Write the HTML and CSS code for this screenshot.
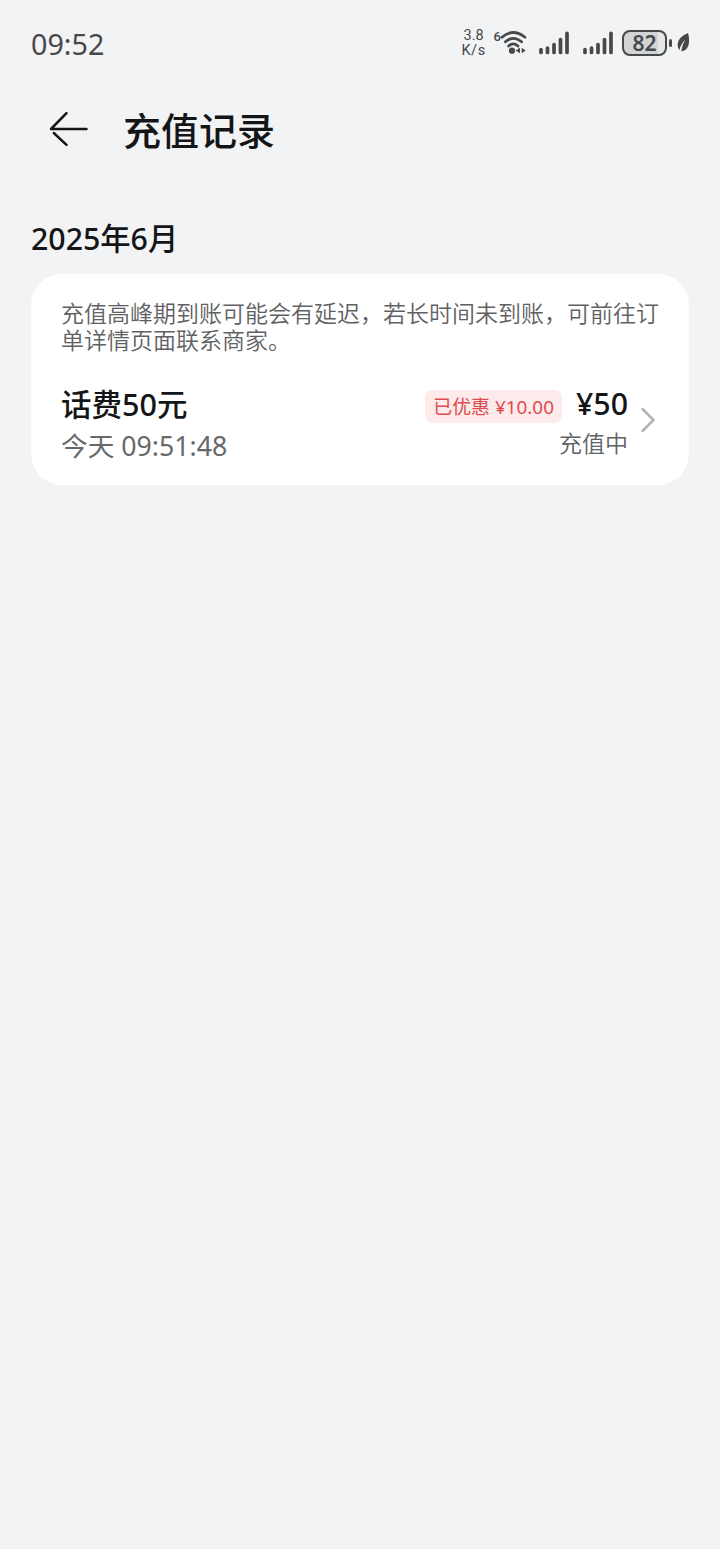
FILE: index.html
```html
<!DOCTYPE html>
<html lang="zh-CN">
<head>
<meta charset="utf-8">
<title>充值记录</title>
<link rel="stylesheet" href="styles.css">
</head>
<body>
<header class="status">
  <span class="clock">09:52</span>
  <div class="indicators">
    <div class="speed"><span>3.8</span><span>K/s</span></div>
    <span class="wifi-gen">6</span>
    <svg class="wifi" width="27" height="30" viewBox="7 0 27 30">
      <g fill="none" stroke="#47484a" stroke-width="2.7" stroke-linecap="round">
        <path d="M9 9.200Q20 -.2 32 9.200"/>
        <path d="M12.400 13.800Q20.200 6.800 28.600 13.800"/>
        <path d="M15.600 18Q20.200 13.800 25 18"/>
      </g>
      <circle cx="19" cy="22.700" r="3.100" fill="#47484a"/>
      <path d="M27 19.700v5.600l-4.300-2.800zM28.700 19.700v5.600l4-2.800z" fill="#47484a"/>
    </svg>
    <svg class="signal" width="30" height="24" viewBox="0 0 30 24">
      <path d="M2 18.500v3M8.500 17v4.500M15 13.500v8M21.500 8.500v13M28 2.300v19.200"/>
    </svg>
    <svg class="signal" width="30" height="24" viewBox="0 0 30 24">
      <path d="M2 18.500v3M8.500 17v4.500M15 13.500v8M21.500 8.500v13M28 2.300v19.200"/>
    </svg>
    <div class="battery"><span>82</span></div>
    <i class="battery-tip"></i>
    <svg class="leaf" width="13" height="22" viewBox="0 0 13 22">
      <path d="M11 1Q1 5 .6 12.500Q.6 16.300 2.600 18.300Q3 13 8.200 7.800Q5 13 4.200 19.300C12 18.500 13.500 10 11 1Z" fill="#47484a"/>
    </svg>
  </div>
</header>
<nav class="titlebar">
  <svg class="back" width="40" height="36" viewBox="0 0 40 36">
    <path d="M17.500 2.200L2 18H37.500M4.800 22L17.500 33.800"/>
  </svg>
  <h1>充值记录</h1>
</nav>
<main>
  <h2>2025年6月</h2>
  <section class="card">
    <p class="notice">充值高峰期到账可能会有延迟，若长时间未到账，可前往订单详情页面联系商家。</p>
    <div class="record">
      <div class="info">
        <span class="name">话费50元</span>
        <span class="time">今天 09:51:48</span>
      </div>
      <div class="payment">
        <div class="amount"><span class="discount">已优惠 ¥10.00</span><span class="price">¥50</span></div>
        <span class="state">充值中</span>
      </div>
      <svg class="chevron" width="16" height="28" viewBox="0 0 16 28">
        <path d="M2.500 3L13.500 14L2.500 25"/>
      </svg>
    </div>
  </section>
</main>
</body>
</html>
```
FILE: styles.css
```css
* { box-sizing: border-box; }
body {
  margin: 0;
  min-height: 1549px;
  background: #f1f3f5;
  color: #141516;
  font-family: "Noto Sans", "Noto Sans CJK SC", sans-serif;
}
span { white-space: nowrap; }
.status {
  height: 86px;
  padding: 0 31px;
  display: flex;
  align-items: center;
  justify-content: space-between;
  color: #47484a;
}
.clock { padding-top: 2px; font-size: 28.700px; line-height: 40px; }
.indicators { display: flex; align-items: center; }
.speed {
  width: 26px;
  margin-right: 7px;
  display: flex;
  flex-direction: column;
  align-items: center;
  font-family: Roboto, sans-serif;
  font-size: 14.500px;
  line-height: 15px;
}
.speed span + span { letter-spacing: .6px; }
.wifi-gen { margin: 0 -1px 12px 0; font: 500 13px/16px Roboto, sans-serif; }
.wifi { margin-right: 12px; }
.signal {
  margin-right: 14px;
  fill: none;
  stroke: #47484a;
  stroke-width: 3.7;
  stroke-linecap: round;
}
.signal + .battery { margin-left: -5px; }
.battery {
  width: 45px;
  height: 26px;
  border: 2px solid #47484a;
  border-radius: 8px;
  background: linear-gradient(90deg, #d2d3d5 84%, #e5e7e9 84%);
  display: flex;
  align-items: center;
  justify-content: center;
  font-size: 21px;
  font-weight: 600;
  line-height: 22px;
}
.battery-tip { width: 3px; height: 8px; margin: 0 5px 0 2px; border-radius: 2px; background: #47484a; }
.leaf { margin-right: -1px; }
.titlebar {
  height: 86px;
  padding-left: 49px;
  display: flex;
  align-items: center;
}
.back { margin-right: 34px; fill: none; stroke: #141516; stroke-width: 2.5; stroke-linecap: round; stroke-linejoin: round; }
h1 { margin: 0; padding-top: 1px; font-size: 38px; line-height: 54px; font-weight: 500; }
main { padding: 46px 31px 0; }
h2 { margin: 0; height: 56px; font-size: 30.300px; line-height: 42px; font-weight: 500; }
.card { height: 211px; padding: 26px 29px 0 30px; border-radius: 31px; background: #fff; }
.notice { margin: 0; color: #606163; font-size: 23px; font-weight: 350; line-height: 27px; }
.record { display: flex; margin-top: 29px; }
.info, .payment { display: flex; flex-direction: column; }
.info { flex: 1; }
.name { font-size: 30.500px; line-height: 42px; font-weight: 500; }
.time { color: #66686a; font-size: 26.700px; line-height: 42px; }
.payment { align-items: flex-end; }
.amount { display: flex; align-items: center; height: 42px; }
.discount {
  height: 33px;
  margin: 4px 14px 0 0;
  padding: 1px 8px 0;
  border-radius: 7px;
  background: #fdebeb;
  color: #df4b50;
  font-size: 18.900px;
  line-height: 33px;
}
.price { font-size: 30.300px; font-weight: 500; line-height: 42px; }
.state { color: #606163; font-size: 23px; font-weight: 350; line-height: 37px; }
.chevron { margin: 23px 4px 0 12px; fill: none; stroke: #b4b5b7; stroke-width: 2.6; stroke-linecap: round; stroke-linejoin: round; }
```
